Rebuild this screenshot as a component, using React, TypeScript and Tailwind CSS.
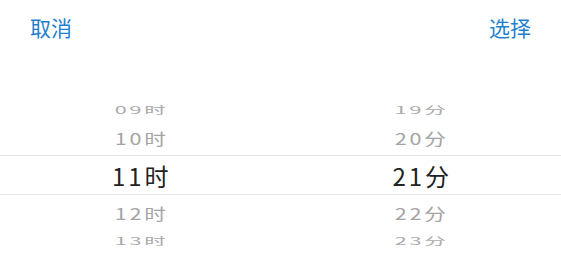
import React from 'react';

const hours = ['09时', '10时', '11时', '12时', '13时'];
const minutes = ['19分', '20分', '21分', '22分', '23分'];

// row heights and text squash, from top to bottom of the wheel
const rows = [
  { h: 'h-[20px]', text: 'scale-x-[0.9] scale-y-[0.42] text-[#aaaaaa]' },
  { h: 'h-[36px]', text: 'scale-x-[0.9] scale-y-[0.68] text-[#a5a5a5]' },
  { h: 'h-[39px]', text: 'text-[#222222]' },
  { h: 'h-[36px]', text: 'scale-x-[0.9] scale-y-[0.68] text-[#a5a5a5]' },
  { h: 'h-[20px]', text: 'scale-x-[0.9] scale-y-[0.42] text-[#aaaaaa]' },
];

function Column({ items }: { items: string[] }) {
  return (
    <div className="flex-1 flex flex-col">
      {items.map((label, i) => (
        <div key={label} className={`${rows[i].h} flex items-center justify-center`}>
          <span className={`inline-block text-[24px] leading-none tracking-[3px] pl-[3px] ${rows[i].text}`}>{label}</span>
        </div>
      ))}
    </div>
  );
}

export default function App() {
  return (
    <div
      className="w-[561px] h-[280px] bg-white overflow-hidden"
      style={{ fontFamily: '"Noto Sans CJK SC", "Noto Sans", sans-serif' }}
    >
      <div className="flex items-center justify-between px-[30px] pt-[9px] h-[46px]">
        <button className="text-[21px] leading-none text-[#1f7fd0]">取消</button>
        <button className="text-[21px] leading-none text-[#1f7fd0]">选择</button>
      </div>

      <div className="relative mt-[54px]">
        <div className="flex">
          <Column items={hours} />
          <Column items={minutes} />
        </div>
        {/* selection band */}
        <div className="absolute left-0 right-0 top-[55px] h-[40px] border-y border-[#e6e6e6] pointer-events-none" />
      </div>
    </div>
  );
}
